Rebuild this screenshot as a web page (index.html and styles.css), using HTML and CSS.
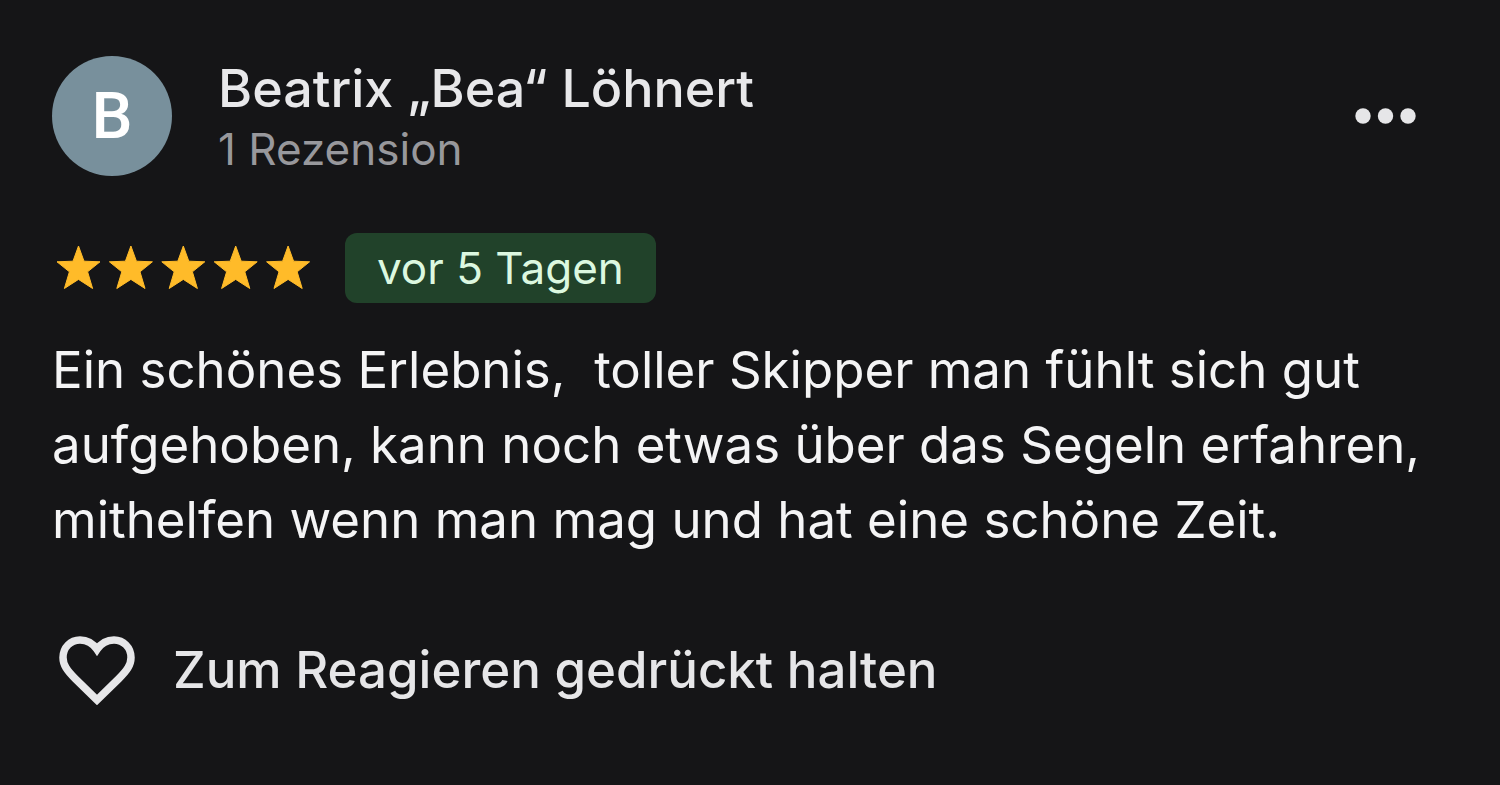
FILE: index.html
```html
<!DOCTYPE html>
<html lang="de">
<head>
    <meta charset="UTF-8">
    <meta name="viewport" content="width=device-width, initial-scale=1.0">
    <title>Rezension</title>
    <link rel="stylesheet" href="styles.css">
</head>
<body>
    <article class="review">
        <header class="review-header">
            <div class="avatar">B</div>
            <div class="author">
                <h1 class="author-name">Beatrix „Bea“ Löhnert</h1>
                <p class="author-count">1 Rezension</p>
            </div>
            <button class="menu-btn" type="button" aria-label="Weitere Optionen">
                <svg width="62" height="16" viewBox="0 0 62 16" fill="currentColor">
                    <circle cx="9" cy="8" r="7.7"/>
                    <circle cx="31.5" cy="8" r="7.7"/>
                    <circle cx="54" cy="8" r="7.7"/>
                </svg>
            </button>
        </header>

        <div class="rating">
            <svg class="stars" width="256" height="46" viewBox="0 0 256 46" role="img" aria-label="5 von 5 Sternen">
                <defs>
                    <path id="star" d="M22.5 1 L28 16.2 L44 16.8 L31.6 26.8 L36.6 43.5 L22.5 34.4 L8.4 43.5 L13.4 26.8 L1 16.8 L17 16.2 Z"/>
                </defs>
                <use href="#star" x="0"/>
                <use href="#star" x="52.4"/>
                <use href="#star" x="104.8"/>
                <use href="#star" x="157.2"/>
                <use href="#star" x="209.6"/>
            </svg>
            <span class="badge">vor 5 Tagen</span>
        </div>

        <p class="review-text">Ein schönes Erlebnis,&nbsp; toller Skipper man fühlt sich gut aufgehoben, kann noch etwas über das Segeln erfahren, mithelfen wenn man mag und hat eine schöne Zeit.</p>

        <button class="react-btn" type="button">
            <svg width="76" height="70" viewBox="0 0 76 70" fill="none" stroke="currentColor" stroke-width="7.5">
                <path d="M38 65 L16 43.5 C8 35.5 4 30 4 22.5 C4 12.5 11.5 5 21 5 C28 5 34 8.5 38 14.5 C42 8.5 48 5 55 5 C64.5 5 72 12.5 72 22.5 C72 30 68 35.5 60 43.5 Z"/>
            </svg>
            <span>Zum Reagieren gedrückt halten</span>
        </button>
    </article>
</body>
</html>
```
FILE: styles.css
```css
body {
    font-family: Inter, Roboto, sans-serif;
    background-color: #151517;
    color: #f4f4f5;
    margin: 0;
}

.review {
    padding: 56px 52px;
}

.review-header {
    display: flex;
    align-items: center;
}

.avatar {
    display: flex;
    align-items: center;
    justify-content: center;
    flex-shrink: 0;
    width: 120px;
    height: 120px;
    border-radius: 50%;
    background-color: #78909c;
    color: white;
    font-family: Roboto, sans-serif;
    font-size: 65px;
    font-weight: 500;
    line-height: 80px;
}

.author {
    flex: 1;
    margin-left: 46px;
}

.author-name {
    margin: 0;
    color: #e8e8ea;
    font-size: 52px;
    font-weight: 500;
    line-height: 66px;
}

.author-count {
    margin: 0;
    color: #98989c;
    font-size: 44px;
    line-height: 54px;
}

.menu-btn,
.react-btn {
    border: none;
    background: none;
    padding: 0;
    color: #e6e6e8;
    font-family: inherit;
    cursor: pointer;
}

.menu-btn {
    display: flex;
    margin-right: 32px;
}

.rating {
    display: flex;
    align-items: center;
    gap: 33px;
    margin-top: 57px;
    padding-left: 4px;
}

.stars {
    fill: #ffbb29;
    stroke: #ffbb29;
    stroke-width: 1;
    stroke-linejoin: round;
}

.badge {
    padding: 0 32px;
    border-radius: 12px;
    background-color: #21422a;
    color: #dcf8e0;
    font-size: 44px;
    line-height: 70px;
}

.review-text {
    margin: 29px 0 0;
    font-size: 51px;
    line-height: 75px;
}

.react-btn {
    display: flex;
    align-items: center;
    gap: 38px;
    margin-top: 73px;
    padding-left: 7px;
    font-size: 51px;
    font-weight: 500;
    line-height: 80px;
}
```
